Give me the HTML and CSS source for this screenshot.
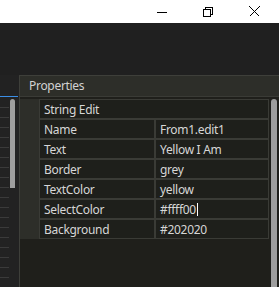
FILE: index.html
```html
<!DOCTYPE html>
<html>
<head>
    <title>Properties</title>
    <link rel="stylesheet" href="styles.css">
</head>
<body>
    <div class="titlebar">
        <div class="ctl">
            <svg width="10" height="10" viewBox="0 0 10 10"><path d="M0 5.5H10" stroke="#000" stroke-width="1"/></svg>
        </div>
        <div class="ctl">
            <svg width="10" height="10" viewBox="0 0 10 10" fill="none" stroke="#000" stroke-width="1">
                <rect x="0.5" y="2.5" width="7" height="7"/>
                <path d="M2.5 2.5V0.5H9.5V7.5H7.5"/>
            </svg>
        </div>
        <div class="ctl">
            <svg width="11" height="11" viewBox="0 0 11 11" fill="none" stroke="#000" stroke-width="1">
                <path d="M0.5 0.5L10.5 10.5M10.5 0.5L0.5 10.5"/>
            </svg>
        </div>
    </div>

    <div class="workspace">
        <div class="sidebar">
            <div class="sidebar-line"></div>
            <div class="sidebar-body">
                <div class="ruler"></div>
                <div class="thumb"></div>
            </div>
        </div>

        <div class="panel">
            <div class="panel-head">Properties</div>
            <div class="panel-body">
                <div class="props">
                    <div class="row">
                        <span class="gut"></span>
                        <span class="cat">String Edit</span>
                    </div>
                    <div class="row">
                        <span class="gut"></span>
                        <span class="name">Name</span>
                        <span class="val">From1.edit1</span>
                    </div>
                    <div class="row">
                        <span class="gut"></span>
                        <span class="name">Text</span>
                        <span class="val">Yellow I Am</span>
                    </div>
                    <div class="row">
                        <span class="gut"></span>
                        <span class="name">Border</span>
                        <span class="val">grey</span>
                    </div>
                    <div class="row">
                        <span class="gut"></span>
                        <span class="name">TextColor</span>
                        <span class="val">yellow</span>
                    </div>
                    <div class="row">
                        <span class="gut"></span>
                        <span class="name">SelectColor</span>
                        <span class="val">#ffff00<span class="caret"></span></span>
                    </div>
                    <div class="row">
                        <span class="gut"></span>
                        <span class="name">Background</span>
                        <span class="val">#202020</span>
                    </div>
                </div>
                <div class="vscroll"></div>
            </div>
        </div>
    </div>
</body>
</html>
```

FILE: styles.css
```css
html, body {
    margin: 0;
    padding: 0;
}
body {
    width: 279px;
    height: 287px;
    overflow: hidden;
    background: #202020;
    font-family: "Noto Sans", "Liberation Sans", sans-serif;
    font-size: 12px;
    letter-spacing: -0.3px;
    color: #d6d6d6;
}
.titlebar {
    height: 23px;
    background: #ffffff;
    display: flex;
    justify-content: flex-end;
    padding-right: 2px;
}
.ctl {
    width: 46px;
    display: flex;
    align-items: center;
    justify-content: center;
}
.ctl svg {
    shape-rendering: crispEdges;
}
.workspace {
    display: flex;
    margin-top: 52px;
    height: 212px;
}
.sidebar {
    width: 19px;
    display: flex;
    flex-direction: column;
    background: #222222;
}
.sidebar-line {
    margin-top: 21px;
    height: 1px;
    background: #3b8ee6;
    margin-right: 1px;
}
.sidebar-body {
    flex: 1;
    display: flex;
    padding-top: 2px;
}
.ruler {
    width: 9px;
    margin-top: 8px;
    margin-right: 1px;
    background: repeating-linear-gradient(to bottom, #3a3a3a 0, #3a3a3a 1px, transparent 1px, transparent 10px);
}
.thumb {
    width: 5px;
    height: 89px;
    background: #9e9e9e;
    border-radius: 3px 3px 0 0;
}
.panel {
    flex: 1;
    display: flex;
    flex-direction: column;
    border-left: 1px solid #3e3f3a;
    border-top: 1px solid #3e3f3a;
    background: #1f1f1b;
}
.panel-head {
    height: 20px;
    line-height: 20px;
    padding-left: 9px;
    background: #2d2e29;
    border-bottom: 1px solid #3a3b36;
    color: #d2d2d2;
}
.panel-body {
    flex: 1;
    display: flex;
    padding-top: 2px;
}
.props {
    width: 249px;
}
.row {
    display: flex;
    height: 20px;
}
.gut {
    width: 19px;
    background: #2d2e29;
}
.cat, .name, .val {
    box-sizing: border-box;
    height: 20px;
    line-height: 17px;
    padding-top: 1px;
    border: 1px solid #3a3b36;
    background: #1e1f1b;
    padding-left: 4px;
    white-space: nowrap;
}
.cat {
    width: 230px;
}
.name {
    width: 116px;
}
.val {
    width: 114px;
}
.caret {
    display: inline-block;
    width: 1px;
    height: 13px;
    background: #ffffff;
    vertical-align: -2px;
    margin-left: 1px;
}
.vscroll {
    width: 6px;
    margin-left: 2px;
    background: #9e9e9e;
    border-radius: 3px 3px 0 0;
}
```
